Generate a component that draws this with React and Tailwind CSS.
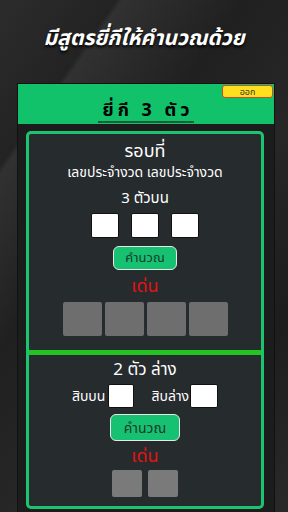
export default function App() {
  return (
    <div className="w-[288px] h-[512px] overflow-hidden flex flex-col bg-[linear-gradient(125deg,#2c2c2c_0%,#232323_18%,#313131_19%,#202020_38%,#272727_58%,#1d1d1d_78%,#2a2a2a_100%)] font-['Noto_Sans','Noto_Sans_Thai','Loma','DejaVu_Sans',sans-serif]">
      <div className="h-[83px] flex items-start justify-center pt-[21px]">
        <h1 className="text-white text-[21px] leading-[32px] font-bold italic [text-shadow:0_2px_3px_#000]">มีสูตรยี่กีให้คำนวณด้วย</h1>
      </div>
      <div className="ml-[17px] w-[258px] flex-1 bg-[#1b1c1c] border-t border-l border-r border-[#111]">
        <div className="relative h-[40px] bg-[#12c26b] flex items-end justify-center pb-[1px]">
          <div className="absolute top-[1px] right-[1px] w-[51px] h-[13px] rounded-[3px] bg-[#ffdf1e] border border-[#c8502a] flex items-center justify-center text-[9px] leading-[10px] text-[#333]">ออก</div>
          <div className="text-black text-[18px] leading-[24px] font-bold tracking-[4px] border-b-2 border-[#1a5a3a] pl-[4px]">ยี่กี 3 ตัว</div>
        </div>
        <div className="mt-[7px] ml-[8px] w-[238px] h-[378px] border-[3px] border-[#1ec36f] rounded-[5px] bg-[#262b2e] flex flex-col overflow-hidden">
          <div className="h-[216px] flex flex-col items-center text-white">
            <div className="mt-[4px] text-[18px] leading-[24px]">รอบที่</div>
            <div className="text-[14px] leading-[20px]">เลขประจำงวด เลขประจำงวด</div>
            <div className="mt-[4px] text-[15px] leading-[22px]">3 ตัวบน</div>
            <div className="mt-[5px] flex gap-[12px]">
              <div className="w-[28px] h-[25px] bg-white rounded-[2px] border border-[#111]" />
              <div className="w-[28px] h-[25px] bg-white rounded-[2px] border border-[#111]" />
              <div className="w-[28px] h-[25px] bg-white rounded-[2px] border border-[#111]" />
            </div>
            <div className="mt-[8px] w-[64px] h-[24px] rounded-[6px] bg-[#17c172] border-[1.5px] border-[#e8e8e8] flex items-center justify-center text-[13px] text-[#1b3a2a]">คำนวณ</div>
            <div className="mt-[4px] text-[18px] leading-[22px] text-[#e31313]">เด่น</div>
            <div className="mt-[6px] flex gap-[3px]">
              <div className="w-[39px] h-[34px] bg-[#6e6e6e] rounded-[2px]" />
              <div className="w-[39px] h-[34px] bg-[#6e6e6e] rounded-[2px]" />
              <div className="w-[39px] h-[34px] bg-[#6e6e6e] rounded-[2px]" />
              <div className="w-[39px] h-[34px] bg-[#6e6e6e] rounded-[2px]" />
            </div>
          </div>
          <div className="h-[5px] bg-[#22c322]" />
          <div className="flex-1 flex flex-col items-center text-white">
            <div className="mt-[3px] text-[17px] leading-[22px]">2 ตัว ล่าง</div>
            <div className="mt-[4px] flex items-center">
              <span className="text-[14px] leading-[20px] mr-[3px]">สิบบน</span>
              <div className="w-[26px] h-[24px] bg-white rounded-[2px] border border-[#111]" />
              <span className="ml-[17px] text-[14px] leading-[20px] mr-[1px]">สิบล่าง</span>
              <div className="w-[28px] h-[24px] bg-white rounded-[2px] border border-[#111]" />
            </div>
            <div className="mt-[6px] w-[70px] h-[27px] rounded-[6px] bg-[#17c172] border-[1.5px] border-[#e8e8e8] flex items-center justify-center text-[14px] text-[#1b3a2a]">คำนวณ</div>
            <div className="mt-[3px] text-[18px] leading-[22px] text-[#e31313]">เด่น</div>
            <div className="mt-[4px] flex gap-[6px]">
              <div className="w-[30px] h-[27px] bg-[#7a7a7a] rounded-[2px]" />
              <div className="w-[30px] h-[27px] bg-[#7a7a7a] rounded-[2px]" />
            </div>
          </div>
        </div>
      </div>
    </div>
  );
}
